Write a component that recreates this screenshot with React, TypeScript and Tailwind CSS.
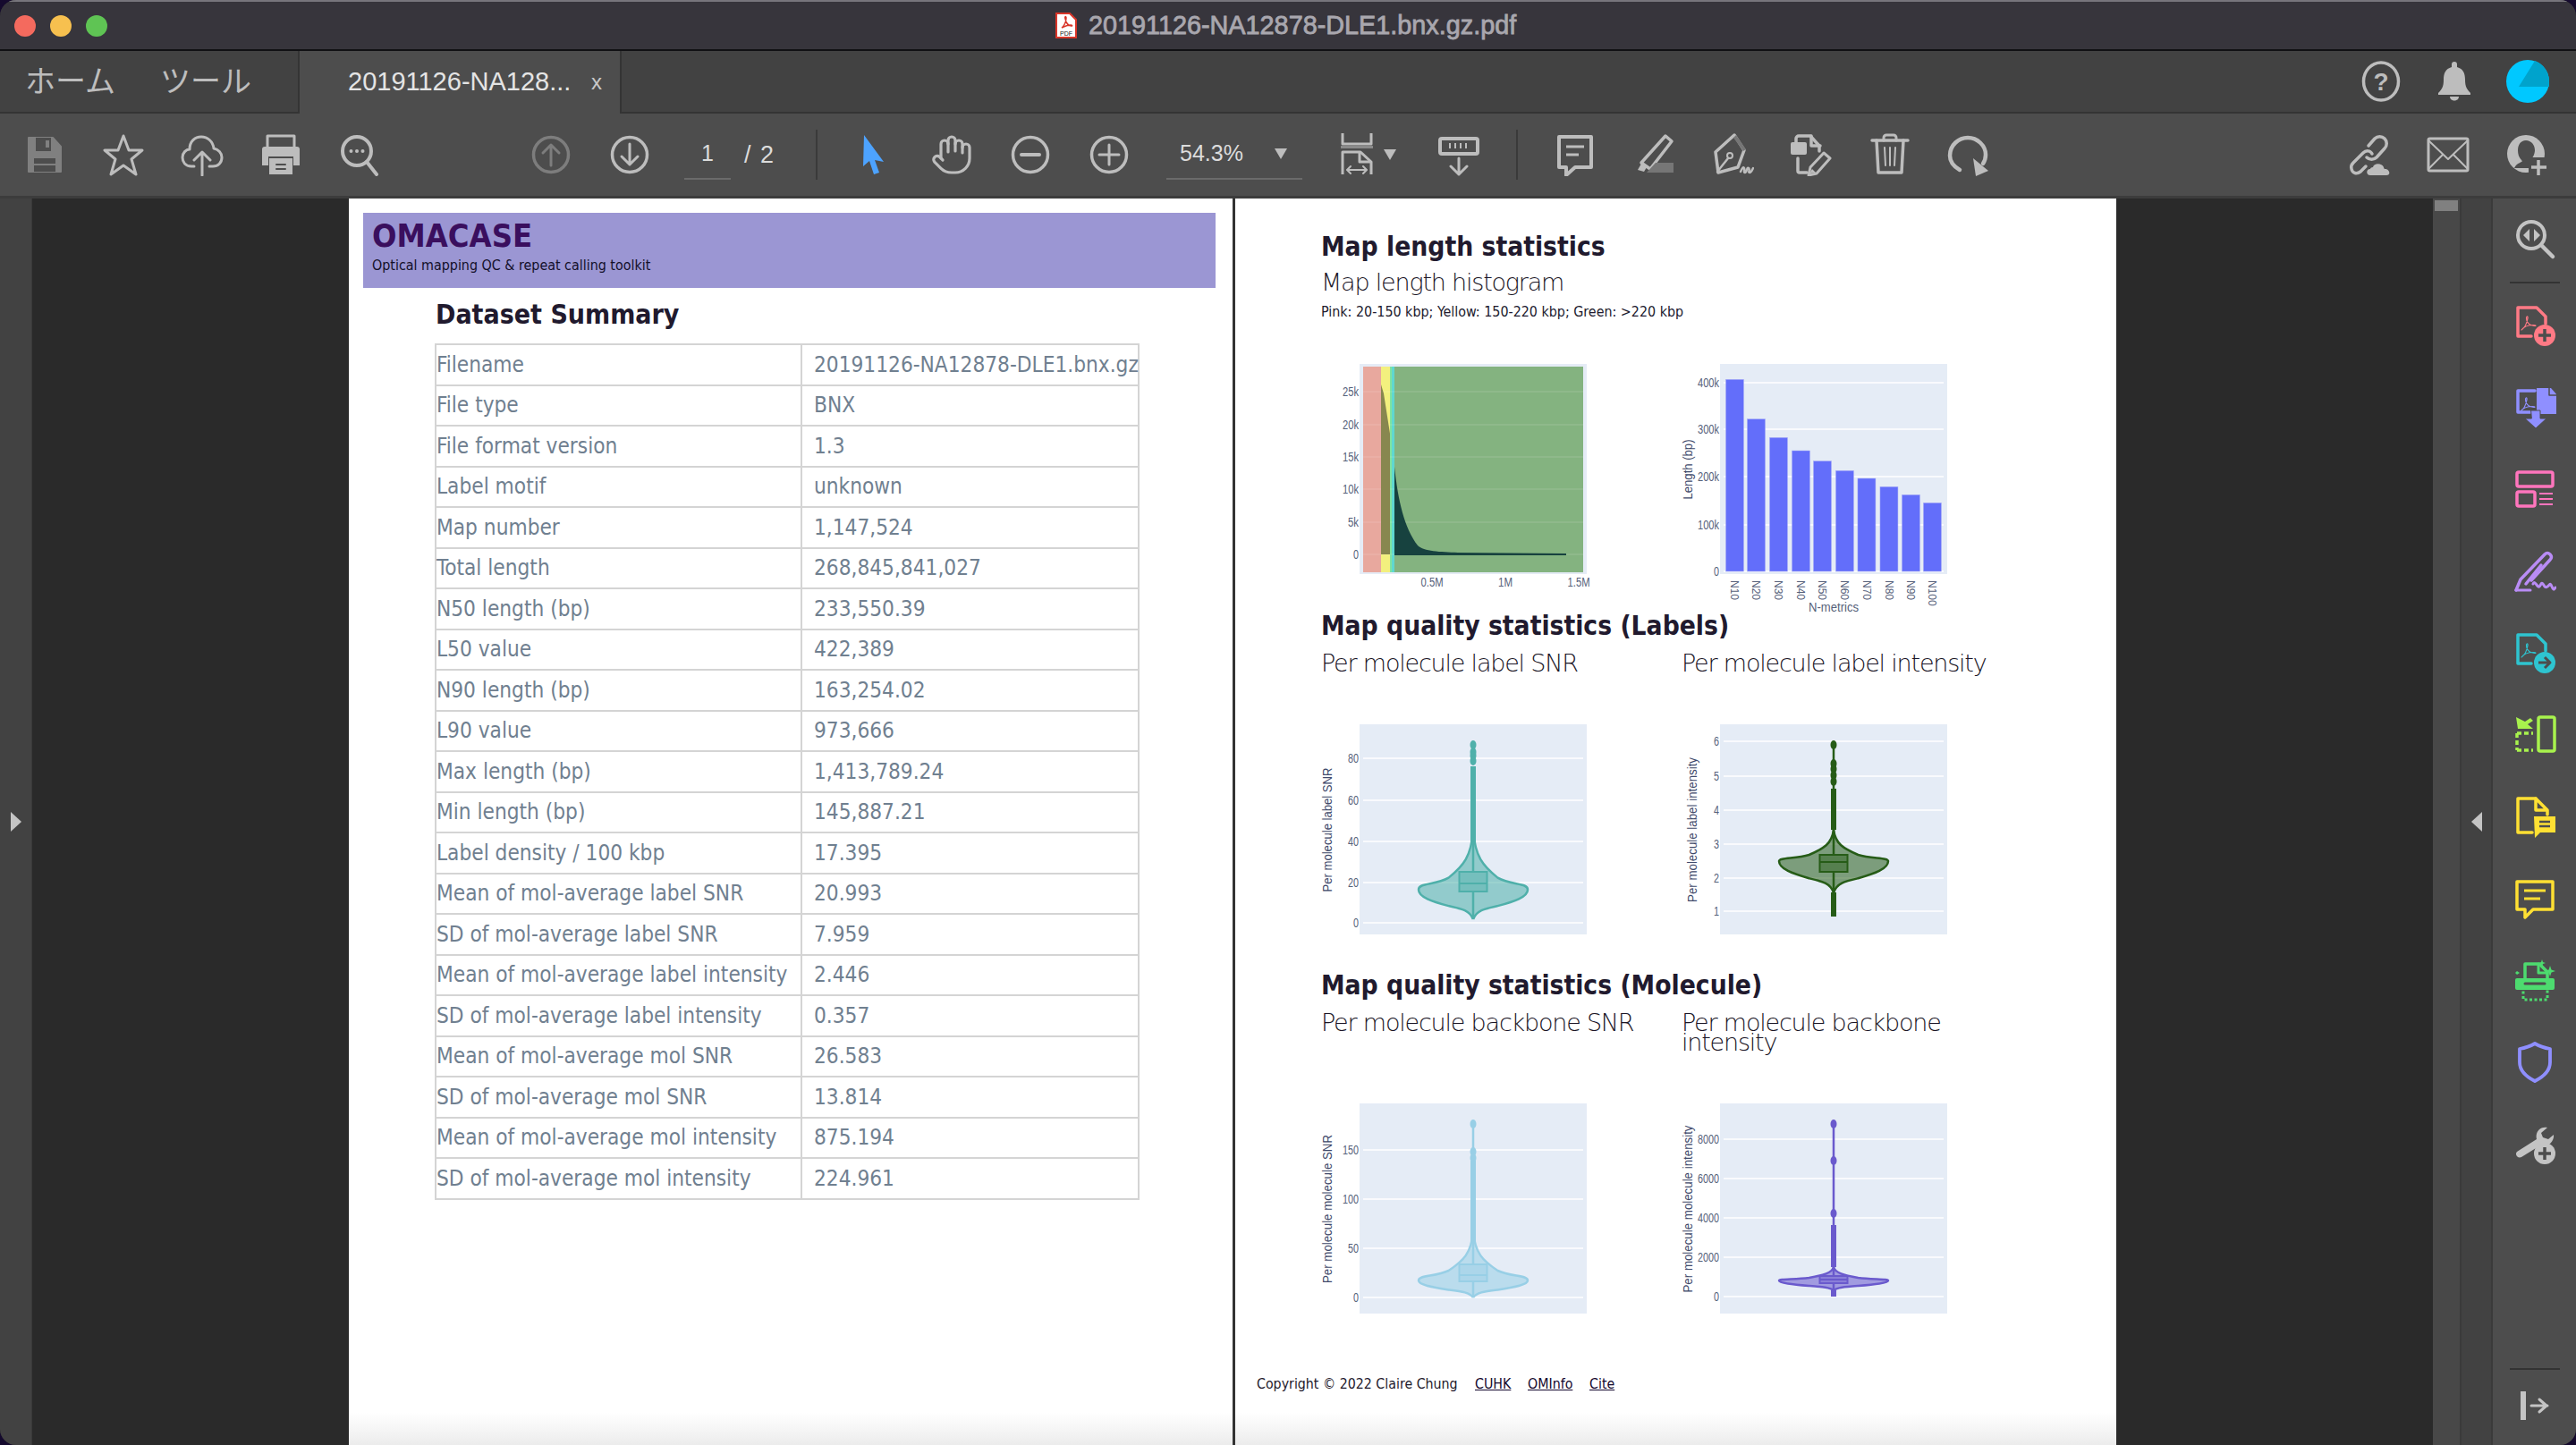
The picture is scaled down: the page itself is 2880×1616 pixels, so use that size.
import type { ReactNode } from 'react';
import { Hand } from 'lucide-react';

const summary: [string, string][] = [
  ['Filename', '20191126-NA12878-DLE1.bnx.gz'],
  ['File type', 'BNX'],
  ['File format version', '1.3'],
  ['Label motif', 'unknown'],
  ['Map number', '1,147,524'],
  ['Total length', '268,845,841,027'],
  ['N50 length (bp)', '233,550.39'],
  ['L50 value', '422,389'],
  ['N90 length (bp)', '163,254.02'],
  ['L90 value', '973,666'],
  ['Max length (bp)', '1,413,789.24'],
  ['Min length (bp)', '145,887.21'],
  ['Label density / 100 kbp', '17.395'],
  ['Mean of mol-average label SNR', '20.993'],
  ['SD of mol-average label SNR', '7.959'],
  ['Mean of mol-average label intensity', '2.446'],
  ['SD of mol-average label intensity', '0.357'],
  ['Mean of mol-average mol SNR', '26.583'],
  ['SD of mol-average mol SNR', '13.814'],
  ['Mean of mol-average mol intensity', '875.194'],
  ['SD of mol-average mol intensity', '224.961'],
];

const G = '#bdbdbd';
const BG = '#4d4d4d';

function Ico({ children, size = 48 }: { children: ReactNode; size?: number }) {
  return (
    <svg width={size} height={size} viewBox="0 0 48 48" fill="none" strokeLinecap="round" strokeLinejoin="round">
      {children}
    </svg>
  );
}

function Cell({ children }: { children: ReactNode }) {
  return <div className="flex w-[88px] shrink-0 items-center justify-center">{children}</div>;
}

const Sep = () => <div className="h-[56px] w-[2px] bg-[#3a3a3a]" />;

function AdobeMark({ color, x = 0, y = 0 }: { color: string; x?: number; y?: number }) {
  return (
    <path
      transform={`translate(${x} ${y})`}
      d="M7 23c3-2 6-7 7-13 .5-3-1.500-3-1.500 0 0 4 3 8 9 8.500 2 .2 2-1-1-1-5 0-11 2-13.500 5.500z"
      stroke={color}
      strokeWidth={1.2}
    />
  );
}

// toolbar icons
const SaveIcon = () => (
  <Ico>
    <path d="M6 5h27l9 10v28H6z" fill="#808080" stroke="#808080" strokeWidth={2} />
    <path d="M14 5h17v15H14zM12 28h24v15H12z" fill={BG} />
    <path d="M25 8h4v8h-4z" fill="#808080" />
    <path d="M12 35h24" stroke="#808080" strokeWidth={2} />
  </Ico>
);
const StarIcon = () => (
  <Ico>
    <path d="M24 3l6 16h15L33 29l5 17-14-10-14 10 5-17L3 19h15z" stroke={G} strokeWidth={3} />
  </Ico>
);
const CloudIcon = () => (
  <Ico>
    <path d="M15 37H12C5 37 2 32 2 27c0-5 4-9 8-9 0-9 6-14 13-14s13 5 14 13c5 1 9 5 9 10 0 6-4 10-10 10h-4" stroke={G} strokeWidth={3} />
    <path d="M24 47V21M15 30l9-9 9 9" stroke={G} strokeWidth={3} />
  </Ico>
);
const PrintIcon = () => (
  <Ico>
    <path d="M9 15V3h30v12" stroke={G} strokeWidth={3} />
    <path d="M3 18a3 3 0 013-3h36a3 3 0 013 3v18H38V26H10v10H3z" fill={G} />
    <path d="M11 28h26v18H11z" fill={G} />
    <path d="M19 35h10M19 40h10" stroke={BG} strokeWidth={2} />
  </Ico>
);
const FindIcon = () => (
  <Ico>
    <circle cx="21" cy="20" r="16" stroke={G} strokeWidth={4} />
    <path d="M32 32l11 14" stroke={G} strokeWidth={4} />
    <circle cx="14.500" cy="20" r="2" fill={G} />
    <circle cx="21" cy="20" r="2" fill={G} />
    <circle cx="27.500" cy="20" r="2" fill={G} />
  </Ico>
);
const PageUpIcon = () => (
  <Ico>
    <circle cx="24" cy="24" r="19.500" stroke="#7d7d7d" strokeWidth={3.500} />
    <path d="M24 36V13M15 22l9-9 9 9" stroke="#7d7d7d" strokeWidth={3} />
  </Ico>
);
const PageDownIcon = () => (
  <Ico>
    <circle cx="24" cy="24" r="19.500" stroke={G} strokeWidth={3.500} />
    <path d="M24 12v23M15 26l9 9 9-9" stroke={G} strokeWidth={3} />
  </Ico>
);
const CursorIcon = () => (
  <Ico>
    <path d="M14 2l22 30-10-2 5 14-6 2-5-15-7 6z" fill="#4da3ff" />
  </Ico>
);
const MinusIcon = () => (
  <Ico>
    <circle cx="24" cy="24" r="19.500" stroke={G} strokeWidth={3.500} />
    <path d="M14 24h20" stroke={G} strokeWidth={4} />
  </Ico>
);
const PlusIcon = () => (
  <Ico>
    <circle cx="24" cy="24" r="19.500" stroke={G} strokeWidth={3.500} />
    <path d="M13 24h22M24 13v22" stroke={G} strokeWidth={3} />
  </Ico>
);
const FitIcon = () => (
  <Ico>
    <path d="M8 0v12h32V0" stroke={G} strokeWidth={3} strokeLinecap="butt" />
    <path d="M6 14h36v3H6z" fill="#8a8a8a" />
    <path d="M8 46V21h20l12 11v14" stroke={G} strokeWidth={3} strokeLinecap="butt" />
    <path d="M27 21v11h13" stroke={G} strokeWidth={3} strokeLinecap="butt" />
    <path d="M14 41h20M17 37l-4 4 4 4M31 37l4 4-4 4" stroke={G} strokeWidth={2} />
  </Ico>
);
const MeasureIcon = () => (
  <Ico>
    <rect x="3" y="6" width="42" height="17" rx="2" stroke={G} strokeWidth={4} />
    <path d="M14 11v6M20 11v6M26 11v6M32 11v6" stroke={G} strokeWidth={2} strokeLinecap="butt" />
    <path d="M24 28v18M15 37l9 9 9-9" stroke={G} strokeWidth={3} />
  </Ico>
);
const CommentIcon = () => (
  <Ico>
    <path d="M6 4h36v34H24l-10 9v-9H6z" stroke={G} strokeWidth={4} />
    <path d="M14 15h20M14 24h14" stroke={G} strokeWidth={3} strokeLinecap="butt" />
  </Ico>
);
const HighlightIcon = () => (
  <Ico>
    <path d="M37 3l7 6-24 31-10-7z" stroke={G} strokeWidth={3.500} />
    <path d="M6 41l4-7 6 4-3 5z" fill={G} />
    <path d="M16 44h30v-11H26z" fill="#767676" />
  </Ico>
);
const SignIcon = () => (
  <Ico>
    <path d="M26 2l11 17-7 19-22 6-3-23z" stroke={G} strokeWidth={3.500} />
    <path d="M28 2l11 16-3 2L25 5z" fill="#767676" />
    <path d="M7 43l12-15" stroke={G} strokeWidth={2.500} />
    <circle cx="21" cy="25" r="3" stroke={G} strokeWidth={2} />
    <path d="M33 43c2-4 3-6 4-4s-1 5 1 5 2-7 4-5-1 5 1 5 3-3 4-5" stroke={G} strokeWidth={2.500} />
  </Ico>
);
const StampIcon = () => (
  <Ico>
    <path d="M7 10V6a3 3 0 013-3h13l10 11v6" stroke={G} strokeWidth={3.500} />
    <path d="M24 3v11h10" stroke={G} strokeWidth={3.500} />
    <rect x="1" y="10" width="18" height="14" rx="2" fill={G} />
    <path d="M9 28v14a2 2 0 002 2h8" stroke={G} strokeWidth={3.500} />
    <path d="M38 22l7 6-15 17-9 2 2-9z" stroke={G} strokeWidth={3} />
    <path d="M22 45l3-5 4 4z" fill={G} />
  </Ico>
);
const TrashIcon = () => (
  <Ico>
    <path d="M4 8h40" stroke={G} strokeWidth={3.500} />
    <path d="M9 8l2 36h26l2-36" stroke={G} strokeWidth={3.500} />
    <path d="M17 8V5a3 3 0 013-3h8a3 3 0 013 3v3" stroke={G} strokeWidth={3} />
    <path d="M18 16l1 20M24 16v20M30 16l-1 20" stroke={G} strokeWidth={2} />
  </Ico>
);
const RotateIcon = () => (
  <Ico>
    <path d="M14 41C7 37 3 31 3 25 3 13 13 5 23 5c11 0 20 9 20 19 0 4-1 7-3 10" stroke={G} strokeWidth={4.500} />
    <path d="M29 28l17 14-14 6z" fill={G} />
  </Ico>
);
const LinkCloudIcon = () => (
  <Ico>
    <path d="M20 37l-6 6c-4 3-9 2-10-3-1-3 0-5 2-7l11-11c3-3 8-3 10 1" stroke={G} strokeWidth={3.500} />
    <path d="M21 27c3 3 8 3 11 0l9-10c3-3 3-8 0-11s-8-3-11 0l-7 8" stroke={G} strokeWidth={3.500} />
    <path d="M25 47c-5 0-5-7 0-7 0-1 1-2 3-2 1-5 10-5 12 0 0 1 1 2 1 2 5-1 8 7 2 7z" fill={G} />
  </Ico>
);
const MailIcon = () => (
  <Ico>
    <rect x="2" y="6" width="44" height="36" rx="1.500" stroke={G} strokeWidth={3} />
    <path d="M2 8l22 21L46 8M2 40l16-16M46 40L30 24" stroke={G} strokeWidth={2} />
  </Ico>
);
const UserPlusIcon = () => (
  <Ico>
    <circle cx="23" cy="23" r="21" fill={G} />
    <path d="M23 8c6 0 10 5 10 11 0 5-3 9-5 11 2 2 7 3 8 4l-2 5H10c2-4 4-5 8-7 1 0 1-1 0-2-3-3-4-7-4-11 0-6 3-11 9-11z" fill={BG} />
    <rect x="26" y="27" width="22" height="22" fill={BG} />
    <path d="M37 30v17M29 38h17" stroke={G} strokeWidth={3.500} strokeLinecap="butt" />
  </Ico>
);

// right rail icons
const DocOutline = ({ c }: { c: string }) => (
  <path d="M36 22v-8L26 4H5v32h15" stroke={c} strokeWidth={3.500} />
);
const ZoomCompareIcon = () => (
  <Ico>
    <circle cx="20" cy="19" r="15" stroke="#c4c4c4" strokeWidth={4} />
    <path d="M31 30l13 13" stroke="#c4c4c4" strokeWidth={4.500} />
    <path d="M18 12v14l-7-7zM23 12v14l7-7z" fill="#c4c4c4" />
  </Ico>
);
const CreatePdfIcon = () => (
  <Ico>
    <DocOutline c="#ff7a85" />
    <AdobeMark color="#ff7a85" x={2} y={6} />
    <circle cx="35" cy="35" r="12" fill="#ff7a85" />
    <path d="M28 35h14M35 28v14" stroke={BG} strokeWidth={3.500} strokeLinecap="butt" />
  </Ico>
);
const CombineIcon = () => (
  <Ico>
    <path d="M24 5H5v24h14" stroke="#8f8fff" strokeWidth={3.500} />
    <AdobeMark color="#8f8fff" x={1} y={5} />
    <path d="M26 2h16l7 8v21H26z" fill="#8f8fff" />
    <path d="M40 1v9h9" stroke={BG} strokeWidth={1.500} />
    <path d="M20 27h10v9h7L25 47 13 36h7z" fill="#8f8fff" stroke={BG} strokeWidth={1} />
  </Ico>
);
const OrganizeIcon = () => (
  <Ico>
    <rect x="4" y="5" width="40" height="16" rx="2" stroke="#ff75bd" strokeWidth={3.500} />
    <rect x="4" y="27" width="20" height="16" rx="2" stroke="#ff75bd" strokeWidth={3.500} />
    <path d="M29 29h15M29 35h15M29 41h15" stroke="#ff75bd" strokeWidth={2.200} strokeLinecap="butt" />
  </Ico>
);
const FillSignIcon = () => (
  <Ico>
    <path d="M3 45l5-12L35 5c2-2 4-2 6 0 2 2 2 4 0 6L20 34" stroke="#b98cf5" strokeWidth={3.500} />
    <path d="M14 38l17-21" stroke="#b98cf5" strokeWidth={3.500} />
    <path d="M3 45h16M22 38c2-5 5 5 7 3s2-5 4-3 2 5 5 3 3-5 5 0 3 3 4 1" stroke="#b98cf5" strokeWidth={3} />
  </Ico>
);
const ExportIcon = () => (
  <Ico>
    <DocOutline c="#2ec4d0" />
    <AdobeMark color="#2ec4d0" x={2} y={6} />
    <circle cx="35" cy="35" r="12" fill="#2ec4d0" />
    <path d="M28 35h12M35 29l6 6-6 6" stroke={BG} strokeWidth={3} strokeLinecap="butt" />
  </Ico>
);
const SendIcon = () => (
  <Ico>
    <rect x="28" y="4" width="18" height="38" rx="2" stroke="#a8f24d" strokeWidth={3.500} />
    <path d="M3 4l2 13h17l-6-5 6-4-3-3-6 4z" fill="#a8f24d" />
    <path d="M4 22h18M4 41h18M4 22v19" stroke="#a8f24d" strokeWidth={3.500} strokeDasharray="5 3" strokeLinecap="butt" />
  </Ico>
);
const ReviewIcon = () => (
  <Ico>
    <path d="M25 4H5v38h16" stroke="#ffe033" strokeWidth={3.500} />
    <path d="M25 4l13 13H25zM38 17v5" stroke="#ffe033" strokeWidth={3.500} />
    <path d="M23 24h24v18H30l-6 6z" fill="#ffe033" />
    <path d="M29 30h12M29 35h12" stroke={BG} strokeWidth={2.500} strokeLinecap="butt" />
  </Ico>
);
const NoteIcon = () => (
  <Ico>
    <path d="M4 5h40v31H22l-9 9v-9H4z" stroke="#ffe033" strokeWidth={3.500} />
    <path d="M12 15h24M12 24h18" stroke="#ffe033" strokeWidth={3.200} strokeLinecap="butt" />
  </Ico>
);
const ScanIcon = () => (
  <Ico>
    <path d="M13 22V6h16l9 9v7" stroke="#4ddb6f" strokeWidth={3.500} />
    <path d="M28 6v10h10" stroke="#4ddb6f" strokeWidth={3} />
    <path d="M4 22h40a2 2 0 012 2v9a2 2 0 01-2 2H4a2 2 0 01-2-2v-9a2 2 0 012-2z" fill="#4ddb6f" />
    <path d="M13 28h22" stroke={BG} strokeWidth={3} />
    <path d="M11 31v15h27V31" stroke="#4ddb6f" strokeWidth={3} strokeDasharray="3 2.500" strokeLinecap="butt" />
    <path d="M41 8l1.500 4.500L47 14l-4.500 1.500L41 20l-1.500-4.500L35 14l4.500-1.500zM4 14l3 2-3 2-2-2zM32 1l1 3 3 1-3 1-1 3-1-3-3-1 3-1z" fill="#4ddb6f" />
  </Ico>
);
const ShieldIcon = () => (
  <Ico>
    <path d="M24 3c5 3 11 5 17 6v15c0 10-9 17-17 21C16 41 7 34 7 24V9c6-1 12-3 17-6z" stroke="#8f8fff" strokeWidth={3.800} />
  </Ico>
);
const ToolAddIcon = () => (
  <Ico>
    <path d="M4 33l22-14c-2-8 4-15 12-13l-7 6 2 5 6 2 6-5c1 8-7 15-15 12L9 39c-4 2-8-3-5-6z" fill="#c4c4c4" />
    <circle cx="35" cy="35" r="12" fill="#c4c4c4" />
    <path d="M28 35h14M35 28v14" stroke={BG} strokeWidth={3.500} strokeLinecap="butt" />
  </Ico>
);

function violinPath(cx: number, t: number, w: number, b: number, hw: number) {
  const du = w - t;
  const dl = b - w;
  const side = (s: number) =>
    `C${cx + s * 2} ${t + 0.45 * du} ${cx + s * 0.18 * hw} ${t + 0.6 * du} ${cx + s * 0.45 * hw} ${t + 0.8 * du}` +
    `C${cx + s * 0.7 * hw} ${t + 0.93 * du} ${cx + s * hw} ${w - 0.12 * du} ${cx + s * hw} ${w}` +
    `C${cx + s * hw} ${w + 0.25 * dl} ${cx + s * 0.75 * hw} ${w + 0.4 * dl} ${cx + s * 0.45 * hw} ${w + 0.55 * dl}` +
    `C${cx + s * 0.2 * hw} ${w + 0.65 * dl} ${cx + s * 4} ${w + 0.7 * dl} ${cx} ${b}`;
  return `M${cx} ${t}${side(1)}M${cx} ${t}${side(-1)}`;
}

function Tick({ x, y, w, children, anchor = 'end' }: { x: number; y: number; w: number; children: string; anchor?: 'end' | 'middle' }) {
  return (
    <text
      x={x}
      y={y + 5}
      textAnchor={anchor}
      fontSize={14}
      fill="#56617a"
      textLength={w}
      lengthAdjust="spacingAndGlyphs"
      className="font-['Liberation_Sans',sans-serif]"
    >
      {children}
    </text>
  );
}

function AxisTitle({ x, y, len, children }: { x: number; y: number; len: number; children: string }) {
  return (
    <text
      transform={`translate(${x} ${y}) rotate(-90)`}
      textAnchor="middle"
      y={5}
      fontSize={14}
      fill="#3f4a6b"
      textLength={len}
      lengthAdjust="spacingAndGlyphs"
      className="font-['Liberation_Sans',sans-serif]"
    >
      {children}
    </text>
  );
}

function Chart({ x, y, top, children }: { x: number; y: number; top: number; children: ReactNode }) {
  const panelX = x + 50;
  return (
    <svg width={320} height={318} viewBox={`${x} ${y} 320 318`} className="shrink-0 overflow-visible">
      <rect x={panelX} y={top} width={254} height={235} fill="#e5ecf6" />
      {children}
    </svg>
  );
}

function Grid({ x, ys, labels }: { x: number; ys: number[]; labels: string[] }) {
  return (
    <>
      {ys.map((y, i) => (
        <g key={y}>
          <line x1={x + 4} x2={x + 250} y1={y} y2={y} stroke="#ffffff" strokeWidth={1.500} />
          <Tick x={x - 1} y={y} w={labels[i].length * 6}>
            {labels[i]}
          </Tick>
        </g>
      ))}
    </>
  );
}

type ViolinProps = {
  cx: number;
  top: number;
  widest: number;
  bottom: number;
  boxTop: number;
  boxBottom: number;
  median: number;
  color: string;
  thin: [number, number];
  thick: [number, number][];
  dots: number[];
};

function Violin({ cx, top, widest, bottom, boxTop, boxBottom, median, color, thin, thick, dots }: ViolinProps) {
  return (
    <g>
      <path d={violinPath(cx, top, widest, bottom, 61)} fill={color} fillOpacity={0.55} stroke={color} strokeWidth={2.500} />
      <line x1={cx} x2={cx} y1={thin[0]} y2={thin[1]} stroke={color} strokeWidth={2.500} />
      {thick.map(([a, b]) => (
        <line key={a} x1={cx} x2={cx} y1={a} y2={b} stroke={color} strokeWidth={6} />
      ))}
      {dots.map((d) => (
        <ellipse key={d} cx={cx} cy={d} rx={3.500} ry={5} fill={color} />
      ))}
      <rect x={cx - 15.500} y={boxTop} width={31} height={boxBottom - boxTop} fill="#e5ecf6" />
      <rect x={cx - 15.500} y={boxTop} width={31} height={boxBottom - boxTop} fill={color} fillOpacity={0.75} stroke={color} strokeWidth={2} />
      <line x1={cx - 15} x2={cx + 15} y1={median} y2={median} stroke={color} strokeWidth={2} />
    </g>
  );
}

const barTops = [553, 686, 748, 792, 827, 859, 885, 913, 940, 967].map((v) => 240 + v / 3);
const barCenters = [979, 1026, 1075, 1124, 1171, 1220, 1268, 1317, 1365, 1412].map((v) => 1440 + v / 1.96);
const barNames = ['N10', 'N20', 'N30', 'N40', 'N50', 'N60', 'N70', 'N80', 'N90', 'N100'];

function HistogramChart() {
  const ticks: [number, string][] = [
    [438, '25k'],
    [475, '20k'],
    [511, '15k'],
    [547, '10k'],
    [584, '5k'],
    [620, '0'],
  ];
  return (
    <Chart x={1470} y={362} top={407}>
      <rect x={1524} y={410} width={20} height={230} fill="#e8a89e" />
      <rect x={1544} y={410} width={10} height={230} fill="#f3f07e" />
      <rect x={1554} y={410} width={2} height={230} fill="#7fe3a0" />
      <rect x={1556} y={410} width={3} height={230} fill="#5fd8d0" />
      <rect x={1559} y={410} width={211} height={230} fill="#84b380" />
      {ticks.map(([y, label]) => (
        <g key={label}>
          <line x1={1524} x2={1770} y1={y} y2={y} stroke="#ffffff" strokeOpacity={0.12} strokeWidth={1.500} />
          <Tick x={1519} y={y} w={label.length * 6}>
            {label}
          </Tick>
        </g>
      ))}
      <path d="M1544 430L1547 440L1554 485V620H1544Z" fill="#88874f" />
      <path d="M1559 522C1563 560 1570 590 1585 610C1592 617 1610 617 1630 618L1751 619V621H1559Z" fill="#17423f" />
      <Tick x={1601} y={651} w={25} anchor="middle">0.5M</Tick>
      <Tick x={1683} y={651} w={16} anchor="middle">1M</Tick>
      <Tick x={1765} y={651} w={25} anchor="middle">1.5M</Tick>
    </Chart>
  );
}

function BarsChart() {
  return (
    <Chart x={1873} y={362} top={407}>
      <Grid x={1923} ys={[428, 480, 533, 587, 639]} labels={['400k', '300k', '200k', '100k', '0']} />
      {barCenters.map((cx, i) => (
        <g key={barNames[i]}>
          <rect x={cx - 10} y={barTops[i]} width={20} height={639 - barTops[i]} fill="#636efa" stroke="#a9aef5" strokeWidth={0.5} />
          <text
            transform={`translate(${cx - 4} 649) rotate(90)`}
            fontSize={12}
            fill="#56617a"
            className="font-['Liberation_Sans',sans-serif]"
          >
            {barNames[i]}
          </text>
        </g>
      ))}
      <AxisTitle x={1887} y={525} len={67}>Length (bp)</AxisTitle>
      <Tick x={2050} y={679} w={56} anchor="middle">N-metrics</Tick>
    </Chart>
  );
}

function Footer() {
  return (
    <div className="mt-auto h-[36px] bg-gradient-to-b from-white to-[#ececec]" />
  );
}

const dejavu = "font-['DejaVu_Sans',sans-serif] [font-stretch:condensed]";

function Heading({ children }: { children: string }) {
  return <h2 className={`h-[40px] pl-[96px] text-[29.700px] leading-[40px] font-bold text-[#211a2e] ${dejavu}`}>{children}</h2>;
}

function LeftPage() {
  return (
    <section className={`flex w-[988px] shrink-0 flex-col bg-white ${dejavu}`}>
      <header className="mt-[16px] mr-[19px] ml-[16px] h-[84px] bg-[#9b96d3] pl-[10px]">
        <div className="pt-[5px] text-[36px] leading-[42px] font-bold text-[#3a0f5e]">OMACASE</div>
        <div className="text-[15.900px] leading-[24px] text-[#14102a]">Optical mapping QC &amp; repeat calling toolkit</div>
      </header>
      <h2 className="mt-[10px] h-[40px] pl-[97px] text-[30px] leading-[40px] font-bold text-[#211a2e]">Dataset Summary</h2>
      <table className="mt-[12px] ml-[96px] w-[788px] table-fixed border-collapse text-[24.200px] text-[#708090]">
        <tbody>
          {summary.map(([name, value]) => (
            <tr key={name} className="h-[45.500px]">
              <td className="w-[409px] border-2 border-[#d4d4d4] whitespace-nowrap">{name}</td>
              <td className="border-2 border-[#d4d4d4] pl-[13px] whitespace-nowrap">{value}</td>
            </tr>
          ))}
        </tbody>
      </table>
      <Footer />
    </section>
  );
}

function RightPage() {
  const sub = "text-[27px] leading-[22px] tracking-[-1.200px] text-[#1a1526] font-['DejaVu_Sans',sans-serif] font-extralight [font-stretch:normal]";
  return (
    <section className={`flex min-w-0 flex-1 flex-col bg-white ${dejavu}`}>
      <div className="h-[34px]" />
      <Heading>Map length statistics</Heading>
      <div className={`flex h-[40px] items-center pl-[96px] ${sub}`}>Map length histogram</div>
      <div className="h-[26px] pl-[96px] text-[15.900px] leading-[26px] text-[#211a2e]">Pink: 20-150 kbp; Yellow: 150-220 kbp; Green: &gt;220 kbp</div>
      <div className="ml-[89px] flex gap-[83px]">
        <HistogramChart />
        <BarsChart />
      </div>

      <Heading>Map quality statistics (Labels)</Heading>
      <div className={`flex h-[44px] items-center pl-[96px] ${sub}`}>
        <span className="w-[403px] shrink-0">Per molecule label SNR</span>
        <span>Per molecule label intensity</span>
      </div>
      <div className="ml-[89px] flex gap-[83px]">
        <Chart x={1470} y={764} top={810}>
          <Grid x={1520} ys={[848, 895, 941, 987, 1032]} labels={['80', '60', '40', '20', '0']} />
          <Violin cx={1647} top={928} widest={995} bottom={1028} boxTop={975} boxBottom={997} median={988} color="#4fb0aa" thin={[943, 1028]} thick={[[857, 943]]} dots={[833, 841, 845, 851]} />
          <AxisTitle x={1484} y={928} len={139}>Per molecule label SNR</AxisTitle>
        </Chart>
        <Chart x={1873} y={764} top={810}>
          <Grid x={1923} ys={[829, 868, 906, 944, 982, 1019]} labels={['6', '5', '4', '3', '2', '1']} />
          <Violin cx={2050} top={928} widest={963} bottom={998} boxTop={956} boxBottom={975} median={964} color="#265c17" thin={[829, 1025]} thick={[[882, 928], [998, 1025]]} dots={[833, 854, 860, 867, 874]} />
          <AxisTitle x={1892} y={928} len={162}>Per molecule label intensity</AxisTitle>
        </Chart>
      </div>

      <Heading>Map quality statistics (Molecule)</Heading>
      <div className={`flex h-[44px] items-start pt-[11px] pl-[96px] ${sub}`}>
        <span className="w-[403px] shrink-0">Per molecule backbone SNR</span>
        <span className="w-[350px]">Per molecule backbone intensity</span>
      </div>
      <div className="ml-[89px] flex gap-[83px]">
        <Chart x={1470} y={1166} top={1234}>
          <Grid x={1520} ys={[1286, 1341, 1396, 1451]} labels={['150', '100', '50', '0']} />
          <Violin cx={1647} top={1377} widest={1432} bottom={1451} boxTop={1414} boxBottom={1433} median={1426} color="#98cfe6" thin={[1257, 1451]} thick={[[1298, 1390]]} dots={[1257, 1288, 1295]} />
          <AxisTitle x={1484} y={1352} len={166}>Per molecule molecule SNR</AxisTitle>
        </Chart>
        <Chart x={1873} y={1166} top={1234}>
          <Grid x={1923} ys={[1274, 1318, 1362, 1406, 1450]} labels={['8000', '6000', '4000', '2000', '0']} />
          <Violin cx={2050} top={1417} widest={1432} bottom={1443} boxTop={1427} boxBottom={1435} median={1431} color="#6a5acd" thin={[1257, 1450]} thick={[[1370, 1417], [1443, 1450]]} dots={[1257, 1298, 1357]} />
          <AxisTitle x={1887} y={1352} len={187}>Per molecule molecule intensity</AxisTitle>
        </Chart>
      </div>

      <footer className="mt-[46px] flex pl-[24px] text-[15.800px] leading-[36px] text-[#1f1a2c]">
        <span className="w-[244px]">Copyright © 2022 Claire Chung</span>
        <a className="w-[59px] text-[#14082e] underline">CUHK</a>
        <a className="w-[69px] text-[#14082e] underline">OMInfo</a>
        <a className="text-[#14082e] underline">Cite</a>
      </footer>
      <Footer />
    </section>
  );
}

function TitleBar() {
  return (
    <div className="flex h-[57px] shrink-0 items-center border-t-2 border-b-2 border-t-[#77757c] border-b-[#111114] bg-[#37353c] pl-[16px]">
      <div className="flex gap-[16px]">
        <span className="h-[24px] w-[24px] rounded-full bg-[#f46a5e]" />
        <span className="h-[24px] w-[24px] rounded-full bg-[#f7c04f]" />
        <span className="h-[24px] w-[24px] rounded-full bg-[#5fc454]" />
      </div>
      <div className="ml-[1060px] flex items-center gap-[13px]">
        <svg width="24" height="29" viewBox="0 0 24 29">
          <path d="M1 1h15l7 7v20H1z" fill="#ffffff" stroke="#d8362a" strokeWidth={2} />
          <path d="M7 17c3-2 5-7 5-11 0-2-2-2-1 1 1 5 3 8 7 8 1 0 1-1-1-1-4 0-8 2-10 3z" stroke="#d8362a" strokeWidth={1.500} fill="none" />
          <text x="12" y="26" textAnchor="middle" fontSize={7} fill="#222" className="font-['Liberation_Sans',sans-serif]">PDF</text>
        </svg>
        <span className="text-[28.800px] font-medium text-[#a9a7ae] font-['Liberation_Sans',sans-serif] [-webkit-text-stroke:0.800px_#a9a7ae]">20191126-NA12878-DLE1.bnx.gz.pdf</span>
      </div>
    </div>
  );
}

function TabBar() {
  return (
    <div className="flex h-[70px] shrink-0 border-b-2 border-[#343434] bg-[#424242] font-['Liberation_Sans','Noto_Sans_CJK_JP',sans-serif]">
      <div className="flex w-[335px] gap-[50px] border-r-2 border-[#343434] pt-[12px] pl-[28px] text-[34px] leading-[44px] text-[#bdbdbd]">
        <span>ホーム</span>
        <span>ツール</span>
      </div>
      <div className="-mb-[2px] flex w-[360px] items-center border-r-2 border-[#343434] bg-[#4d4d4d] pl-[54px] text-[29px] text-[#e4e4e4]">
        <span className="w-[272px] whitespace-nowrap">20191126-NA128...</span>
        <span className="text-[24px] text-[#c8c8c8]">x</span>
      </div>
      <div className="ml-auto flex items-center pr-[13px]">
        <div className="flex w-[82px] justify-center">
          <svg width="44" height="46" viewBox="0 0 44 46" fill="none">
            <ellipse cx="22" cy="23" rx="19.500" ry="21" stroke={G} strokeWidth={3.500} />
            <text x="22" y="33" textAnchor="middle" fontSize={28} fontWeight={700} fill={G}>?</text>
          </svg>
        </div>
        <div className="flex w-[82px] justify-center">
          <svg width="36" height="44" viewBox="0 0 36 44">
            <path d="M18 0a3 3 0 013 3v3c7 2 9 7 9 14 0 8 2 11 6 15v2H0v-2c4-4 6-7 6-15C6 13 8 8 15 6V3a3 3 0 013-3z" fill={G} />
            <path d="M13 39h10c0 6-10 6-10 0z" fill={G} />
          </svg>
        </div>
        <div className="flex w-[82px] justify-center">
          <svg width="48" height="48" viewBox="0 0 48 48">
            <circle cx="24" cy="24" r="24" fill="#00c8ff" />
            <path d="M32 1A24 24 0 0148 24v6H14z" fill="#00a3cc" />
          </svg>
        </div>
      </div>
    </div>
  );
}

function Toolbar() {
  return (
    <div className="flex h-[95px] shrink-0 items-center border-b-[3px] border-[#3c3c3c] bg-[#4d4d4d] pl-[6px] text-[#dcdcdc] font-['Liberation_Sans',sans-serif]">
      <Cell><SaveIcon /></Cell>
      <Cell><StarIcon /></Cell>
      <Cell><CloudIcon /></Cell>
      <Cell><PrintIcon /></Cell>
      <Cell><FindIcon /></Cell>
      <div className="w-[126px]" />
      <Cell><PageUpIcon /></Cell>
      <Cell><PageDownIcon /></Cell>
      <div className="ml-[17px] flex h-[56px] w-[52px] items-center justify-center border-b-2 border-[#6a6a6a] text-[25px]">1</div>
      <div className="ml-[15px] w-[80px] text-[27px] [word-spacing:3px]">/ 2</div>
      <Sep />
      <div className="w-[18px]" />
      <Cell><CursorIcon /></Cell>
      <Cell><Hand size={48} color={G} strokeWidth={1.600} /></Cell>
      <Cell><MinusIcon /></Cell>
      <Cell><PlusIcon /></Cell>
      <div className="ml-[20px] flex h-[56px] w-[152px] items-center border-b-2 border-[#6a6a6a] pl-[15px] text-[25px]">
        <span className="w-[106px]">54.3%</span>
        <svg width="14" height="12" viewBox="0 0 14 12"><path d="M0 0h14L7 12z" fill={G} /></svg>
      </div>
      <div className="ml-[37px] flex w-[48px] justify-center"><FitIcon /></div>
      <svg className="ml-[6px]" width="14" height="12" viewBox="0 0 14 12"><path d="M0 0h14L7 12z" fill={G} /></svg>
      <div className="ml-[46px] flex w-[48px] justify-center"><MeasureIcon /></div>
      <div className="w-[40px]" />
      <Sep />
      <div className="w-[20px]" />
      <Cell><CommentIcon /></Cell>
      <Cell><HighlightIcon /></Cell>
      <Cell><SignIcon /></Cell>
      <Cell><StampIcon /></Cell>
      <Cell><TrashIcon /></Cell>
      <Cell><RotateIcon /></Cell>
      <div className="ml-auto flex pr-[11px]">
        <Cell><LinkCloudIcon /></Cell>
        <Cell><MailIcon /></Cell>
        <Cell><UserPlusIcon /></Cell>
      </div>
    </div>
  );
}

function RightRail() {
  return (
    <aside className="flex w-[93px] shrink-0 flex-col items-center bg-[#4d4d4d] pt-[22px]">
      <ZoomCompareIcon />
      <div className="my-[23px] h-[2px] w-[56px] bg-[#333333]" />
      <div className="flex flex-col items-center gap-[43.500px]">
        <CreatePdfIcon />
        <CombineIcon />
        <OrganizeIcon />
        <FillSignIcon />
        <ExportIcon />
        <SendIcon />
        <ReviewIcon />
        <NoteIcon />
        <ScanIcon />
        <ShieldIcon />
        <ToolAddIcon />
      </div>
      <div className="mt-auto mb-[28px] flex flex-col items-center gap-[24px]">
        <div className="h-[2px] w-[56px] bg-[#333333]" />
        <svg width="32" height="32" viewBox="0 0 32 32" fill="none">
          <path d="M3 1v30" stroke="#c4c4c4" strokeWidth={6} strokeLinecap="round" />
          <path d="M12 16h18M21 9l8 7-8 7" stroke="#c4c4c4" strokeWidth={3} strokeLinecap="round" strokeLinejoin="round" />
        </svg>
      </div>
    </aside>
  );
}

export default function App() {
  return (
    <div className="h-[1616px] w-[2880px] overflow-hidden bg-[#150a2e]">
      <div className="flex h-full flex-col overflow-hidden rounded-[18px] bg-[#2a2a2a]">
        <TitleBar />
        <TabBar />
        <Toolbar />
        <main className="flex min-h-0 flex-1">
          <div className="flex w-[36px] shrink-0 items-center justify-center border-r border-[#3a3a3a] bg-[#424242]">
            <svg width="12" height="22" viewBox="0 0 12 22"><path d="M0 0l12 11L0 22z" fill="#c4c4c4" /></svg>
          </div>
          <div className="w-[354px] shrink-0" />
          <div className="flex w-[1976px] shrink-0 gap-[3px] bg-[#333333]">
            <LeftPage />
            <RightPage />
          </div>
          <div className="w-[354px] shrink-0" />
          <div className="w-[30px] shrink-0 bg-[#484848] px-[2px] pt-[2px]">
            <div className="h-[12px] bg-[#808080]" />
          </div>
          <div className="flex w-[37px] shrink-0 items-center justify-center border-x-2 border-[#3a3a3a] bg-[#424242]">
            <svg width="12" height="22" viewBox="0 0 12 22"><path d="M12 0L0 11l12 11z" fill="#c4c4c4" /></svg>
          </div>
          <RightRail />
        </main>
      </div>
    </div>
  );
}
